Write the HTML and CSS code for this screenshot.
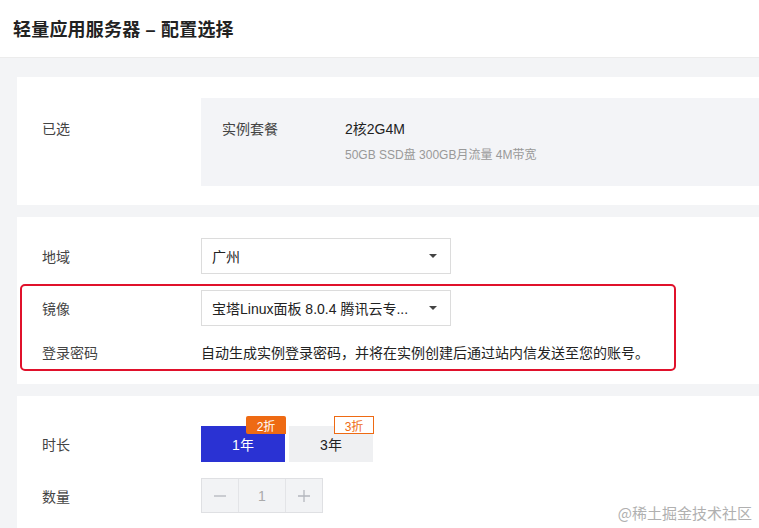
FILE: index.html
```html
<!DOCTYPE html>
<html lang="zh">
<head>
<meta charset="utf-8">
<link rel="stylesheet" href="styles.css">
</head>
<body>
<header class="topbar"><h1 class="title">轻量应用服务器 – 配置选择</h1></header>
<main class="page">
  <section class="card card-selected">
    <div class="row row-top">
      <div class="label label-top">已选</div>
      <div class="summary">
        <div class="sum-key">实例套餐</div>
        <div class="sum-val">
          <div class="sum-main">2核2G4M</div>
          <div class="sum-sub">50GB SSD盘 300GB月流量 4M带宽</div>
        </div>
      </div>
    </div>
  </section>

  <section class="card card-config">
    <div class="row row-region">
      <div class="label">地域</div>
      <div class="select"><span class="select-text">广州</span><span class="caret"></span></div>
    </div>
    <div class="highlight">
      <div class="row row-image">
        <div class="label">镜像</div>
        <div class="select"><span class="select-text">宝塔Linux面板 8.0.4 腾讯云专...</span><span class="caret"></span></div>
      </div>
      <div class="row row-pass">
        <div class="label">登录密码</div>
        <div class="desc">自动生成实例登录密码，并将在实例创建后通过站内信发送至您的账号。</div>
      </div>
    </div>
  </section>

  <section class="card card-buy">
    <div class="row row-time">
      <div class="label">时长</div>
      <div class="seg">
        <div class="opt opt-active">1年<span class="badge badge-fill">2折</span></div>
        <div class="opt">3年<span class="badge badge-line">3折</span></div>
      </div>
    </div>
    <div class="row row-qty">
      <div class="label">数量</div>
      <div class="stepper">
        <span class="step-btn">
          <svg width="14" height="14" viewBox="0 0 14 14"><path d="M1 7h12" stroke="#b4b7bd" stroke-width="1.3"/></svg>
        </span>
        <span class="step-val">1</span>
        <span class="step-btn">
          <svg width="14" height="14" viewBox="0 0 14 14"><path d="M1 7h12M7 1v12" stroke="#b4b7bd" stroke-width="1.3"/></svg>
        </span>
      </div>
    </div>
  </section>
</main>
<div class="watermark">@稀土掘金技术社区</div>
</body>
</html>
```

FILE: styles.css
```css
* { box-sizing: border-box; }
html, body { margin: 0; height: 100%; }
body {
  background: #f3f4f6;
  font-family: "Liberation Sans", "Noto Sans CJK SC", sans-serif;
  font-size: 14px;
  color: #333;
  overflow: hidden;
  position: relative;
}
.topbar {
  height: 58px;
  background: #fff;
  border-bottom: 1px solid #ececec;
  display: flex;
  align-items: center;
  padding-left: 13px;
}
.title {
  margin: 0;
  font-size: 18px;
  font-weight: 700;
  color: #222;
  letter-spacing: 0.2px;
  position: relative;
  top: -1px;
}
.page {
  padding: 19px 0 0 17px;
  display: flex;
  flex-direction: column;
  gap: 12px;
}
.card {
  background: #fff;
  margin-right: -40px;
}
.row { display: flex; align-items: center; }
.row-top { align-items: flex-start; }
.label {
  width: 184px;
  flex: none;
  padding-left: 25px;
  color: #444;
}
.label-top { padding-top: 21px; line-height: 20px; }
.card-selected { padding: 21px 0 19px; }
.summary {
  flex: 1;
  background: #f3f4f7;
  height: 88px;
  display: flex;
  align-items: flex-start;
  padding: 21px 0 0 21px;
}
.sum-key { width: 123px; color: #444; line-height: 20px; }
.sum-main { line-height: 20px; color: #222; }
.sum-sub { font-size: 12px; color: #999; margin-top: 8px; line-height: 16px; }

.card-config { padding: 21px 0 13px; }
.select {
  width: 250px;
  height: 36px;
  border: 1px solid #dcdcdc;
  display: flex;
  align-items: center;
  justify-content: space-between;
  padding: 0 13px 0 10px;
  color: #222;
}
.caret {
  width: 0; height: 0;
  border-left: 4px solid transparent;
  border-right: 4px solid transparent;
  border-top: 4px solid #444;
}
.highlight {
  margin: 10px 0 0 3px;
  width: 656px;
  border: 2px solid #e0112b;
  border-radius: 5px;
  padding: 4px 0 6px;
}
.highlight .label { width: 179px; padding-left: 20px; }
.row-pass { margin-top: 17px; line-height: 20px; }
.desc { color: #222; }

.card-buy { padding: 30px 0 0; height: 133px; }
.seg { display: flex; gap: 4px; }
.opt {
  position: relative;
  width: 84px;
  height: 36px;
  background: #eff0f2;
  display: flex;
  align-items: center;
  justify-content: center;
  color: #222;
}
.opt-active { background: #2a32d3; color: #fff; }
.badge {
  position: absolute;
  top: -10px;
  right: -1px;
  width: 40px;
  height: 18px;
  font-size: 12px;
  display: flex;
  align-items: center;
  justify-content: center;
}
.badge-fill { background: #ee6a13; color: #fff; border-radius: 2px 2px 0 2px; }
.badge-line { background: #fff; color: #ee6a13; border: 1px solid #ee6a13; }
.row-qty { margin-top: 16px; }
.stepper {
  display: flex;
  height: 35px;
  border: 1px solid #dfe0e3;
  background: #f2f3f5;
}
.step-btn {
  width: 36px;
  display: flex;
  align-items: center;
  justify-content: center;
}
.step-val {
  width: 48px;
  border-left: 1px solid #e3e4e7;
  border-right: 1px solid #e3e4e7;
  display: flex;
  align-items: center;
  justify-content: center;
  color: #aaa;
}
.watermark {
  position: absolute;
  right: 7px;
  bottom: 5px;
  font-family: "Noto Sans CJK SC", sans-serif;
  font-size: 15px;
  color: #b0b0b0;
  text-shadow: 0 0 2px #fff, 0 0 2px #fff;
}
```
